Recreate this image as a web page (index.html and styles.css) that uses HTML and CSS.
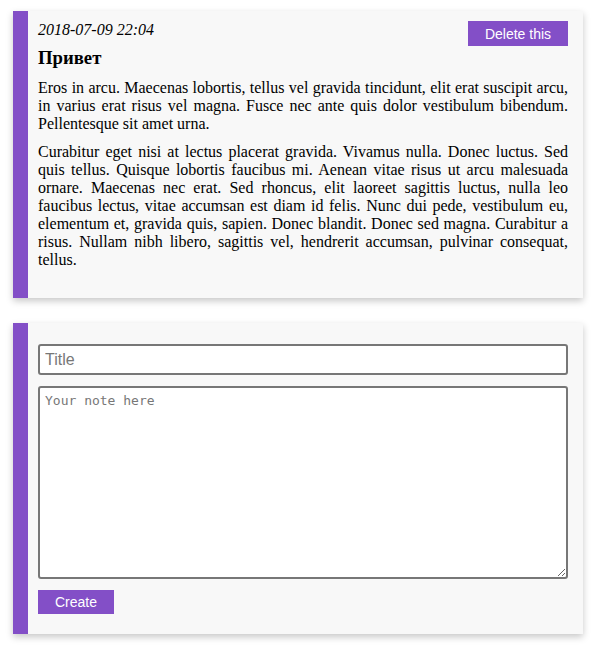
FILE: index.html
```html
<!DOCTYPE html>
<html>
<head>
<meta charset="utf-8">
<link rel="stylesheet" href="styles.css">
</head>
<body>
<div class="card note">
  <button class="btn btn-delete">Delete this</button>
  <div class="date">2018-07-09 22:04</div>
  <h3 class="title">Привет</h3>
  <p>Eros in arcu. Maecenas lobortis, tellus vel gravida tincidunt, elit erat suscipit arcu, in varius erat risus vel magna. Fusce nec ante quis dolor vestibulum bibendum. Pellentesque sit amet urna.</p>
  <p>Curabitur eget nisi at lectus placerat gravida. Vivamus nulla. Donec luctus. Sed quis tellus. Quisque lobortis faucibus mi. Aenean vitae risus ut arcu malesuada ornare. Maecenas nec erat. Sed rhoncus, elit laoreet sagittis luctus, nulla leo faucibus lectus, vitae accumsan est diam id felis. Nunc dui pede, vestibulum eu, elementum et, gravida quis, sapien. Donec blandit. Donec sed magna. Curabitur a risus. Nullam nibh libero, sagittis vel, hendrerit accumsan, pulvinar consequat, tellus.</p>
</div>
<form class="card form">
  <input class="field" type="text" placeholder="Title">
  <textarea class="field area" placeholder="Your note here"></textarea>
  <button class="btn btn-create" type="button">Create</button>
</form>
</body>
</html>
```
FILE: styles.css
```css
body {
  margin: 0;
  padding: 11px 0 0 13px;
  background: #fff;
  font-family: "Liberation Serif", "Times New Roman", serif;
}
.card {
  box-sizing: border-box;
  width: 570px;
  background: #f8f8f8;
  border-left: 15px solid #834fc7;
  box-shadow: 0 3px 7px rgba(0, 0, 0, 0.22);
  padding: 10px 15px 10px 10px;
  margin: 0 0 25px 0;
}
.note {
  display: flow-root;
  padding-bottom: 29px;
}
.btn {
  background: #834fc7;
  color: #fff;
  border: none;
  border-radius: 0;
  font-family: "Liberation Sans", Arial, sans-serif;
  font-size: 14px;
  padding: 0;
  cursor: pointer;
}
.btn-delete {
  float: right;
  width: 100px;
  height: 25px;
}
.date {
  font-style: italic;
  font-size: 16px;
  line-height: 18px;
}
.title {
  font-size: 18.72px;
  margin: 8px 0 10px;
  line-height: 22px;
}
p {
  font-size: 16px;
  line-height: 18px;
  text-align: justify;
  margin: 0 0 10px;
}
p:last-child {
  margin-bottom: 0;
}
.form {
  display: flex;
  flex-direction: column;
  align-items: flex-start;
  padding: 21px 15px 20px 10px;
}
.field {
  box-sizing: border-box;
  width: 530px;
  border: 2px solid #777;
  border-radius: 3px;
  background: #fff;
  margin: 0 0 11px 0;
}
input.field {
  height: 31px;
  padding: 0 5px;
  font-family: "Liberation Sans", Arial, sans-serif;
  font-size: 16px;
}
.area {
  height: 193px;
  padding: 5px 5px;
  font-family: "DejaVu Sans Mono", monospace;
  font-size: 13px;
  resize: vertical;
}
.field::placeholder {
  color: #777;
}
.btn-create {
  width: 76px;
  height: 24px;
}
```
